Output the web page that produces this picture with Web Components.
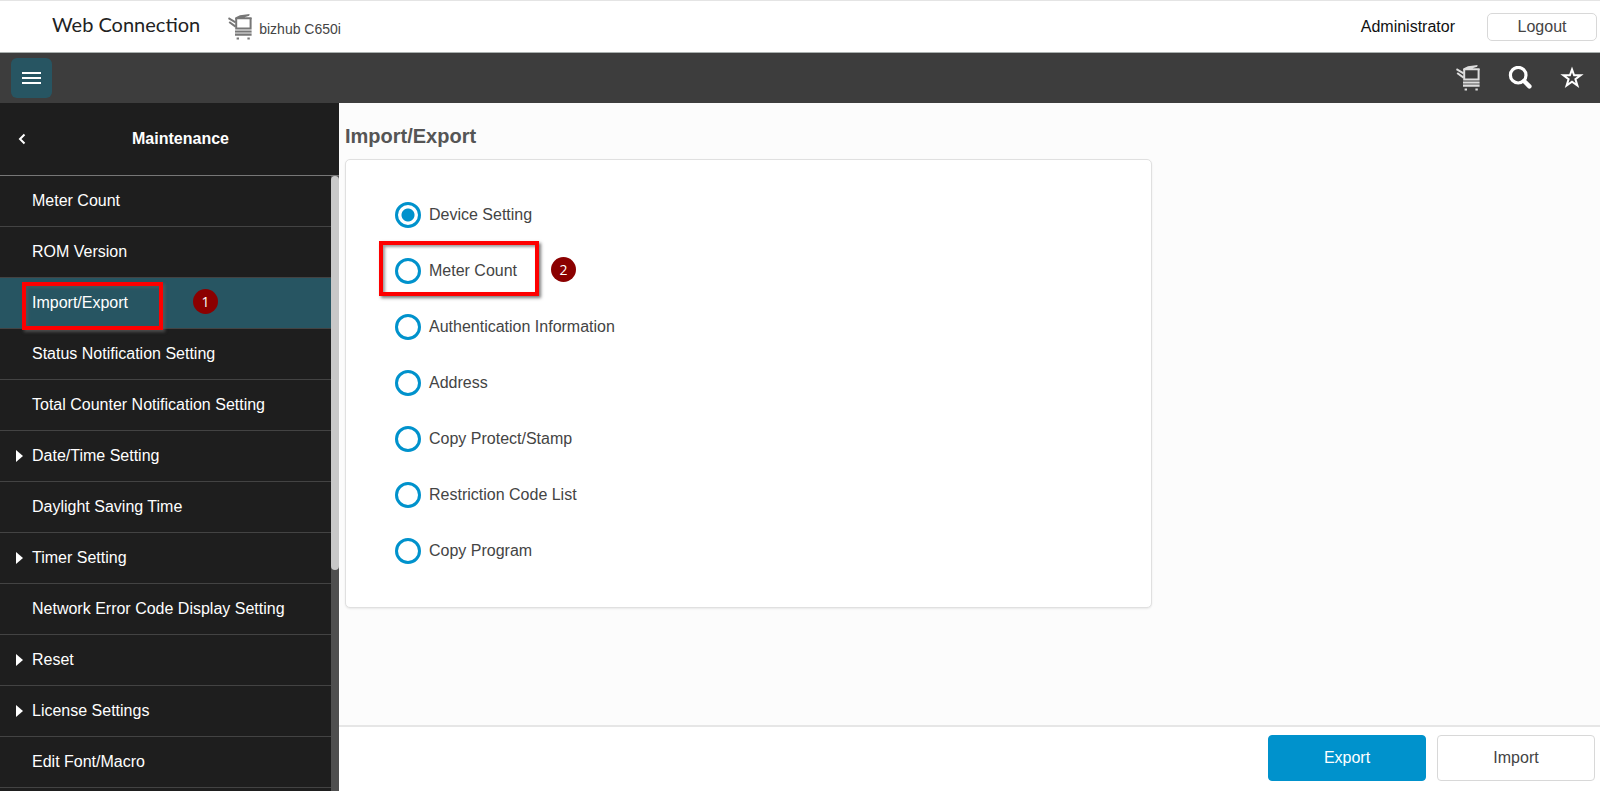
<!DOCTYPE html>
<html lang="en">
<head>
<meta charset="utf-8">
<title>Web Connection</title>
<style>
body{
    margin: 0;
    height: 100vh;
    display: flex;
    flex-direction: column;
    overflow: hidden;
    font-family: "Liberation Sans", Arial, sans-serif;
    font-size: 16px;
    line-height: 20px;
    color: #444;
    background: #fcfcfc;
}
.page{
    flex: 1;
    min-height: 0;
    display: flex;
}
</style>
</head>
<body>
<wc-header user="Administrator">bizhub C650i</wc-header>
<wc-toolbar></wc-toolbar>
<div class="page">
    <wc-sidebar heading="Maintenance">
        <wc-item>Meter Count</wc-item>
        <wc-item>ROM Version</wc-item>
        <wc-item active>Import/Export<wc-mark slot="mark" class="menu">1</wc-mark></wc-item>
        <wc-item>Status Notification Setting</wc-item>
        <wc-item>Total Counter Notification Setting</wc-item>
        <wc-item parent>Date/Time Setting</wc-item>
        <wc-item>Daylight Saving Time</wc-item>
        <wc-item parent>Timer Setting</wc-item>
        <wc-item>Network Error Code Display Setting</wc-item>
        <wc-item parent>Reset</wc-item>
        <wc-item parent>License Settings</wc-item>
        <wc-item>Edit Font/Macro</wc-item>
        <wc-item></wc-item>
    </wc-sidebar>
    <wc-content heading="Import/Export">
        <wc-choices></wc-choices>
    </wc-content>
</div>

<script>
class wcElement extends HTMLElement{
    constructor(){
        super();
        this.attachShadow({mode:'open'});
    }
    connectedCallback(){
        let template = document.createElement('template');
        template.innerHTML = this.render();
        this.shadowRoot.replaceChildren(template.content.cloneNode(true));
    }
}

const icons = {
    printer: `<svg width="24" height="26" viewBox="0 0 24 26" fill="none" stroke="currentColor">
        <path d="M0.4 4.2L7.6 8.4M1.2 8L7.6 12.6" stroke-width="2"/>
        <path d="M8.2 4V14.6H22.6V4" stroke-width="2"/>
        <path d="M7.2 5.2V3.4L12 1.2L21.6 0L21.2 1.8L16.5 3.2H23.6V5.2Z" fill="currentColor" stroke="none"/>
        <path d="M7 17.6H23.6M7 20.8H23.6" stroke-width="2"/>
        <path d="M7 19.2H23.6" stroke-width="1.2" opacity=".5"/>
        <path d="M8.6 24.4H11M19.4 24.4H21.8" stroke-width="2"/></svg>`,
    search: `<svg width="24" height="24" viewBox="0 0 24 24" fill="none" stroke="currentColor">
        <circle cx="10.2" cy="9.2" r="7.8" stroke-width="3.2"/>
        <path d="M16 15L21.4 20.4" stroke-width="4.4" stroke-linecap="round"/></svg>`,
    star: `<svg width="24" height="24" viewBox="0 0 24 24" fill="none" stroke="currentColor">
        <path d="M12 3.4L14.1 9.3H20.6L15.4 13.1L17.4 19.6L12 15.8L6.6 19.6L8.6 13.1L3.4 9.3H9.9Z" stroke-width="2"/></svg>`,
    menu: `<svg width="20" height="20" viewBox="0 0 20 20" stroke="currentColor">
        <path d="M0 5H19M0 10H19M0 15H19" stroke-width="2"/></svg>`,
    back: `<svg width="8" height="12" viewBox="0 0 8 12" fill="none" stroke="currentColor">
        <path d="M6.5 1.5L2 6L6.5 10.5" stroke-width="2"/></svg>`
};

const buttonStyle = `
button{
    font: inherit;
    color: inherit;
    margin: 0;
    padding: 0;
    border: 0;
    background: none;
    cursor: pointer;
}
svg{
    display: block;
}`;

class wcHeader extends wcElement{
    render(){
        return `
<style>
${buttonStyle}
:host{
    display: flex;
    justify-content: space-between;
    align-items: center;
    box-sizing: border-box;
    height: 53px;
    padding: 0 3px 0 52px;
    background: #fff;
    border-top: 1px solid #e4e4e4;
    border-bottom: 1px solid #aab0ae;
}
.brand, .account{
    display: flex;
    align-items: center;
}
.logo{
    font-family: Lato, sans-serif;
    font-size: 20px;
    line-height: 24px;
    color: #222;
    margin-right: 28px;
    padding-bottom: 6px;
}
.brand svg{
    color: #777;
    margin-right: 7px;
}
.model{
    font-size: 14px;
    padding-top: 4px;
}
.account{
    gap: 32px;
    color: #111;
}
.logout{
    width: 110px;
    height: 28px;
    color: #444;
    border: 1px solid #d8d8d8;
    border-radius: 5px;
}
</style>
<div class="brand">
    <span class="logo">Web Connection</span>
    ${icons.printer}
    <span class="model"><slot></slot></span>
</div>
<div class="account">
    <span>${this.getAttribute('user')}</span>
    <button class="logout">Logout</button>
</div>`;
    }
}
customElements.define('wc-header', wcHeader);

class wcToolbar extends wcElement{
    render(){
        return `
<style>
${buttonStyle}
:host{
    display: flex;
    justify-content: space-between;
    align-items: center;
    height: 50px;
    padding: 0 16px 0 11px;
    color: #fff;
    background: #3d3d3d;
}
.menu{
    display: grid;
    place-items: center;
    width: 41px;
    height: 40px;
    border-radius: 6px;
    background: #275562;
}
.tools{
    display: flex;
    align-items: center;
    gap: 28px;
}
.printer{
    color: #ddd;
}
</style>
<button class="menu" aria-label="Menu">${icons.menu}</button>
<div class="tools">
    <button class="printer" aria-label="Device">${icons.printer}</button>
    <button aria-label="Search">${icons.search}</button>
    <button aria-label="Favorites">${icons.star}</button>
</div>`;
    }
}
customElements.define('wc-toolbar', wcToolbar);

class wcSidebar extends wcElement{
    render(){
        return `
<style>
${buttonStyle}
:host{
    display: flex;
    flex-direction: column;
    width: 339px;
    flex: none;
    color: #fff;
    background: #1e1e1e;
}
.head{
    display: flex;
    align-items: center;
    height: 72px;
    border-bottom: 1px solid #777;
}
.head button{
    width: 26px;
    display: flex;
    justify-content: flex-end;
}
h2{
    flex: 1;
    margin: 0;
    padding-right: 4px;
    font-size: 16px;
    text-align: center;
}
.body{
    flex: 1;
    min-height: 0;
    display: flex;
}
nav{
    flex: 1;
    overflow: hidden;
}
.track{
    width: 8px;
    background: #4f4f4f;
}
.thumb{
    height: 64%;
    border-radius: 4px;
    background: #c8c8c8;
}
</style>
<div class="head">
    <button aria-label="Back">${icons.back}</button>
    <h2>${this.getAttribute('heading')}</h2>
</div>
<div class="body">
    <nav><slot></slot></nav>
    <div class="track"><div class="thumb"></div></div>
</div>`;
    }
}
customElements.define('wc-sidebar', wcSidebar);

class wcItem extends wcElement{
    render(){
        return `
<style>
:host{
    display: block;
    position: relative;
}
a{
    display: flex;
    align-items: center;
    box-sizing: border-box;
    height: 51px;
    padding-left: 16px;
    color: #fff;
    text-decoration: none;
    border-bottom: 1px solid #434343;
}
:host([active]) a{
    background: #275562;
}
.arrow{
    width: 16px;
}
:host([parent]) .arrow::before{
    content: "";
    display: block;
    width: 0;
    border: 6px solid transparent;
    border-left: 7px solid #fff;
    border-right: 0;
}
</style>
<a href="#"><span class="arrow"></span><span><slot></slot></span></a>
<slot name="mark"></slot>`;
    }
}
customElements.define('wc-item', wcItem);

// red frame and numbered badge, laid over the row it belongs to
class wcMark extends wcElement{
    render(){
        return `
<style>
:host{
    position: absolute;
    display: flex;
    align-items: flex-start;
    pointer-events: none;
}
:host(.menu){
    top: 4px;
    left: 22px;
    --w: 141px;
    --h: 48px;
    --gap: 30px;
    --drop: 7px;
}
:host(.choice){
    top: -2px;
    left: -16px;
    --w: 160px;
    --h: 55px;
    --gap: 12px;
    --drop: 16px;
}
.frame{
    box-sizing: border-box;
    width: var(--w);
    height: var(--h);
    margin-right: var(--gap);
    border: 4px solid #fe0000;
    box-shadow: 2px 2px 3px rgba(90,90,90,.8), inset 2px 2px 3px rgba(90,90,90,.6);
}
.badge{
    width: 25px;
    height: 25px;
    margin-top: var(--drop);
    border-radius: 50%;
    font: 14px/25px "Open Sans", sans-serif;
    text-align: center;
    color: #fff;
    background: #8b0000;
}
</style>
<div class="frame"></div>
<div class="badge"><slot></slot></div>`;
    }
}
customElements.define('wc-mark', wcMark);

class wcContent extends wcElement{
    render(){
        return `
<style>
${buttonStyle}
:host{
    flex: 1;
    min-width: 0;
    display: flex;
    flex-direction: column;
}
main{
    flex: 1;
    padding-top: 20px;
}
h1{
    margin: 0 6px 10px;
    font-size: 20px;
    line-height: 26px;
    color: #555;
}
.card{
    width: 64%;
    box-sizing: border-box;
    margin: 0 6px;
    padding: 27px 49px 28px;
    background: #fff;
    border: 1px solid #e0e0e0;
    border-radius: 5px;
    box-shadow: 0 1px 2px rgba(0,0,0,.08);
}
footer{
    display: flex;
    justify-content: flex-end;
    gap: 11px;
    padding: 8px 5px 10px;
    background: #fff;
    border-top: 2px solid #e6e6e6;
}
footer button{
    width: 158px;
    height: 46px;
    border: 1px solid #d8d8d8;
    border-radius: 4px;
}
footer .primary{
    color: #fff;
    background: #0092cc;
    border-color: #0092cc;
}
</style>
<main>
    <h1>${this.getAttribute('heading')}</h1>
    <div class="card"><slot></slot></div>
</main>
<footer>
    <button class="primary">Export</button>
    <button>Import</button>
</footer>`;
    }
}
customElements.define('wc-content', wcContent);

class wcChoices extends wcElement{
    render(){
        let names = ['Device Setting', 'Meter Count', 'Authentication Information', 'Address',
            'Copy Protect/Stamp', 'Restriction Code List', 'Copy Program'];
        let rows = names.map((name, i) => `
<div class="row">
    <input type="radio" name="target" id="target${i}" ${i === 0 ? 'checked' : ''}>
    <label for="target${i}">${name}</label>
    ${i === 1 ? '<wc-mark class="choice">2</wc-mark>' : ''}
</div>`);
        return `
<style>
:host{
    display: flex;
    flex-direction: column;
}
.row{
    position: relative;
    display: flex;
    align-items: center;
    gap: 8px;
    height: 56px;
}
input{
    appearance: none;
    box-sizing: border-box;
    width: 26px;
    height: 26px;
    margin: 0;
    border: 3px solid #0092cc;
    border-radius: 50%;
}
input:checked{
    background: radial-gradient(circle, #0092cc 6px, transparent 7px);
}
</style>${rows.join('')}`;
    }
}
customElements.define('wc-choices', wcChoices);
</script>
</body>
</html>
